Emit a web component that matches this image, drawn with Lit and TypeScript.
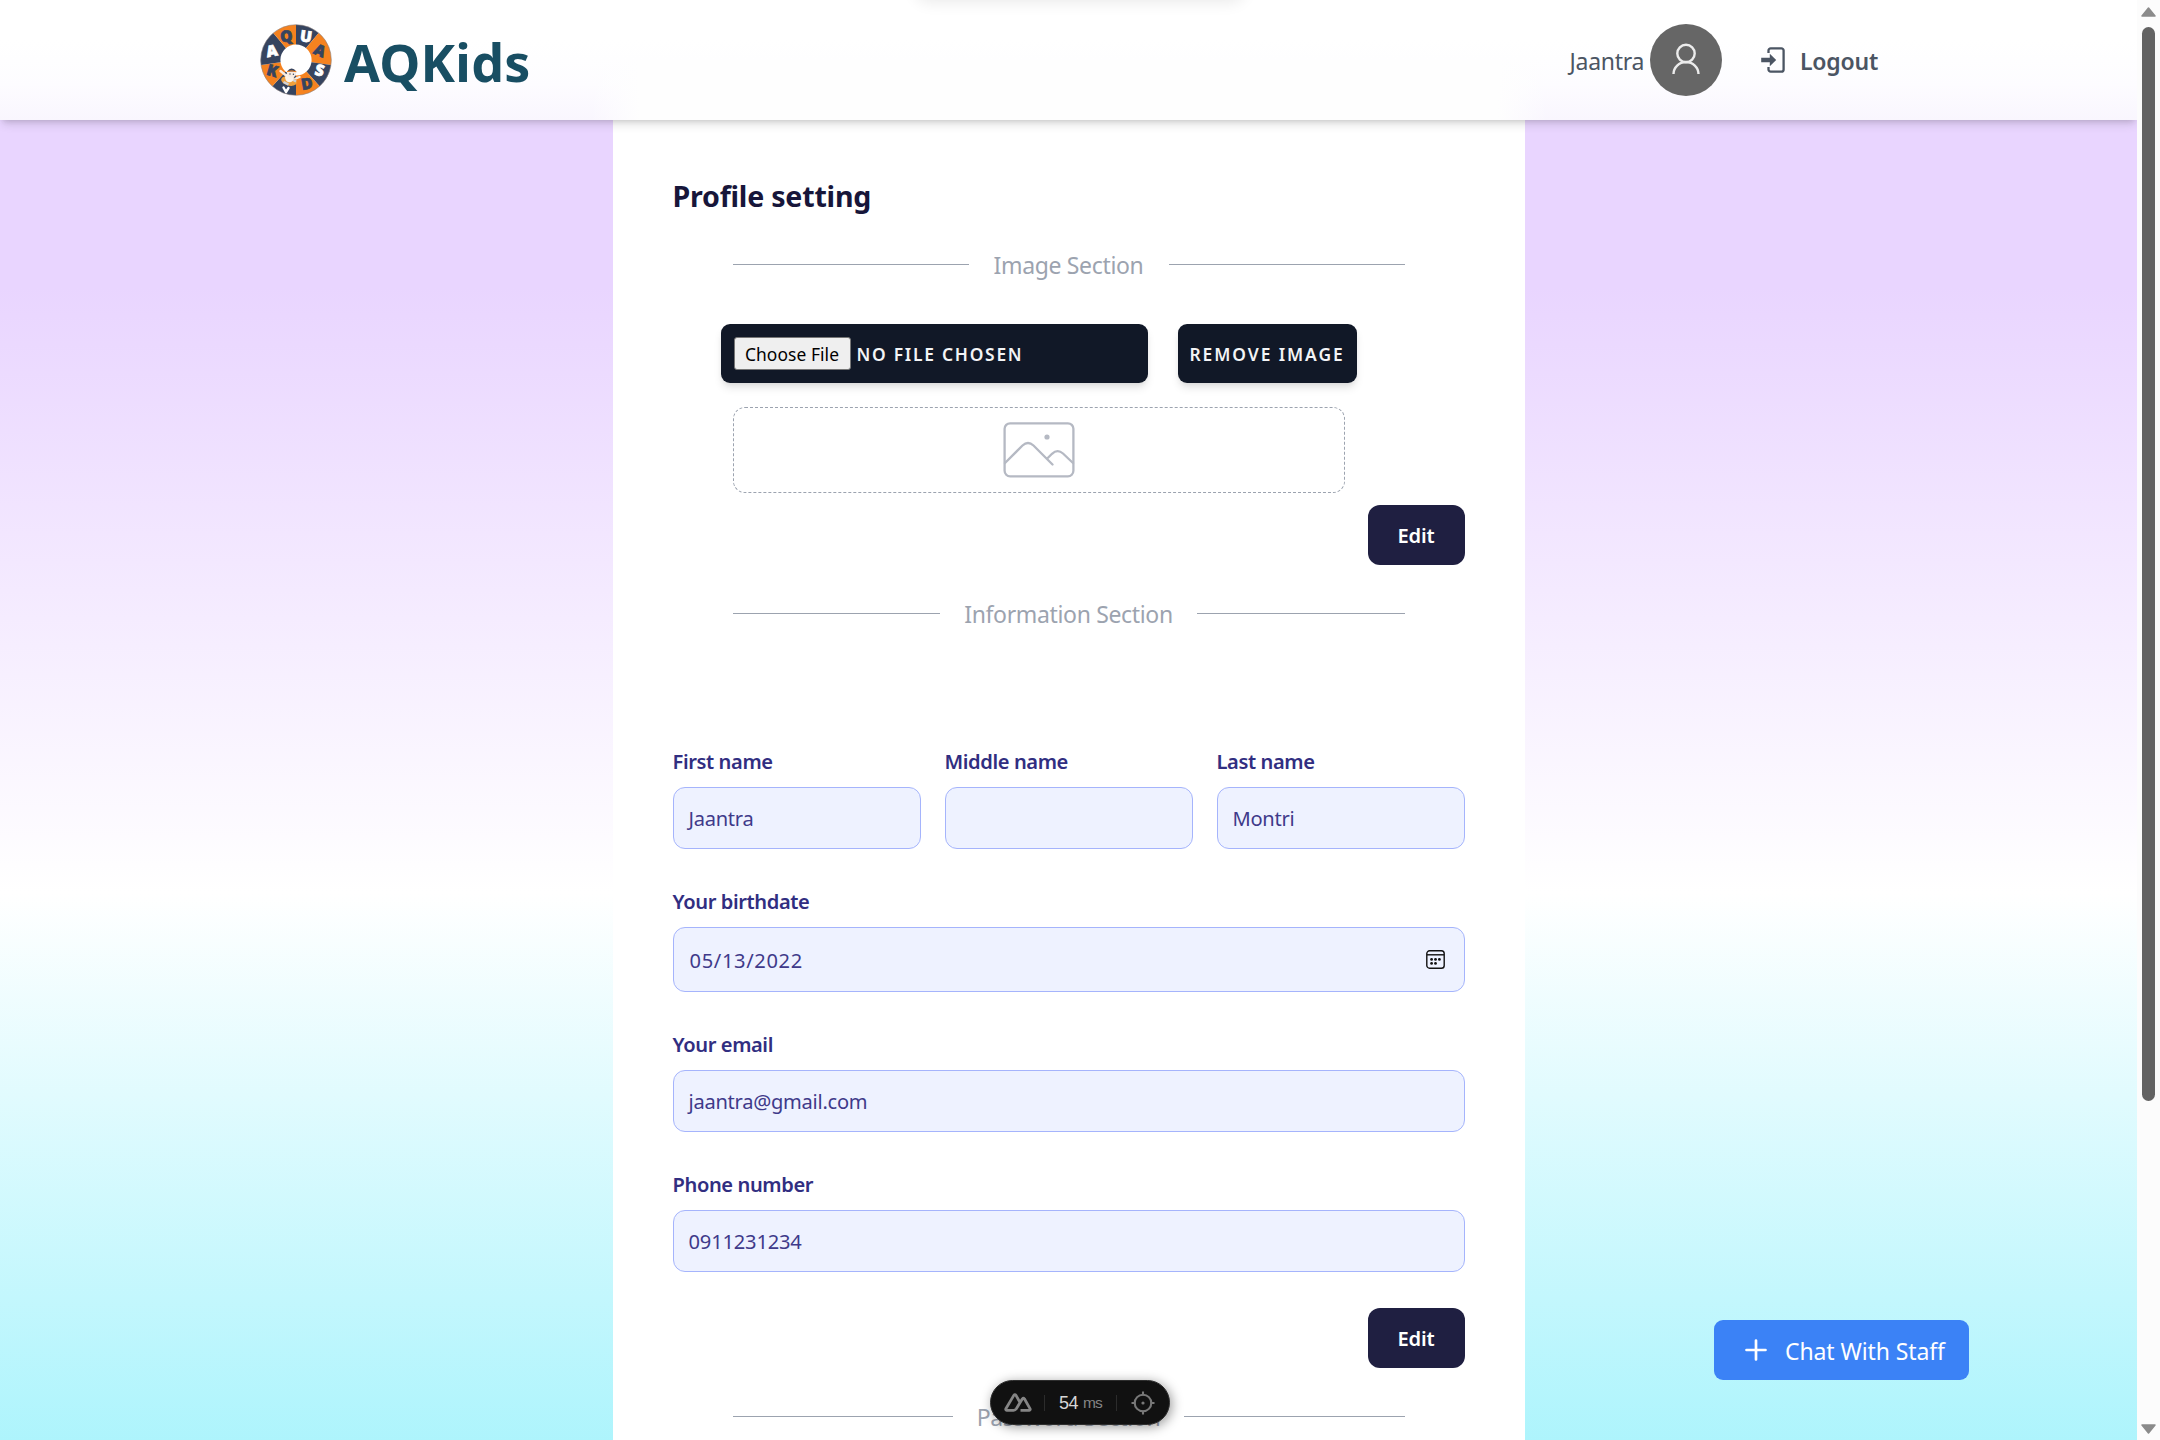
import { LitElement, html, css, svg } from "lit";
import { customElement, property } from "lit/decorators.js";

const fontStack = css`"Noto Sans", "Open Sans", sans-serif`;

/** Round brand mark: a ring of alternating slices with one letter in each. */
@customElement("brand-mark")
class BrandMark extends LitElement {
  static styles = css`
    :host { display: block; width: 72px; height: 72px; }
    svg { display: block; }
    .letter { font: 900 15.5px "Noto Sans", sans-serif; text-anchor: middle; stroke-width: 0.7; }
  `;

  private slices = [
    { from: 0, to: 40, text: "U", at: 23, turn: 8 },
    { from: 40, to: 98, text: "A", at: 68, turn: 24 },
    { from: 98, to: 138, text: "S", at: 113, turn: 14 },
    { from: 138, to: 180, text: "D", at: 155, turn: -10 },
    { from: 180, to: 222, text: "", at: 200, turn: 0 },
    { from: 222, to: 262, text: "K", at: 246, turn: 16 },
    { from: 262, to: 320, text: "A", at: 291, turn: -10 },
    { from: 320, to: 360, text: "Q", at: 338, turn: -6 },
  ];

  private point(deg: number, r: number) {
    const a = (deg * Math.PI) / 180;
    return `${(36 + r * Math.sin(a)).toFixed(2)} ${(36 - r * Math.cos(a)).toFixed(2)}`;
  }

  render() {
    return html`<svg width="72" height="72" viewBox="0 0 72 72">
      ${this.slices.map((s, i) => {
        const navy = i % 2 === 0;
        const ink = navy ? "#fff" : "#36445f";
        return svg`
          <path d="M36 36L${this.point(s.from, 35.3)}A35.3 35.3 0 0 1 ${this.point(s.to, 35.3)}Z"
            fill=${navy ? "#36445f" : "#f5821f"} />
          <g transform="translate(${this.point(s.at, 25.8)}) rotate(${s.turn})">
            <text class="letter" y="5.6" fill=${ink} stroke=${ink}>${s.text}</text>
          </g>`;
      })}
      <circle cx="36" cy="36" r="35.3" fill="none" stroke="#8b7f7c" stroke-width=".6" />
      <circle cx="36" cy="36" r="15.6" fill="#fff" />
      <path d="M20.5 47l5 4M39.5 53l-5 2" stroke="#f7ede4" stroke-width="2.4" stroke-linecap="round" />
      <ellipse cx="29" cy="57" rx="8" ry="4.6" fill="#f0a03c" transform="rotate(14 29 57)" />
      <path d="M23.5 58l5 2.5M31 54.5l5 3" stroke="#cfd3da" stroke-width="2.4" />
      <ellipse cx="29.5" cy="53.5" rx="4.4" ry="4.8" fill="#fbf3ea" />
      <circle cx="31.5" cy="49" r="4.6" fill="#f8ece2" />
      <path d="M27 47.4q4.6-5.8 9.4 0z" fill="#36445f" />
      <path d="M27 47.6q5-1.6 9.4.2" fill="none" stroke="#f5821f" stroke-width="1" />
      <circle cx="30" cy="50" r=".7" fill="#36445f" /><circle cx="33.4" cy="50.2" r=".7" fill="#36445f" />
      <path d="M23.5 63.5l2.5 4.5M28.5 64l-2.5 4" stroke="#fff" stroke-width="2.4" stroke-linecap="round" />
    </svg>`;
  }
}

/** Section caption with a rule on either side. */
@customElement("section-divider")
class SectionDivider extends LitElement {
  @property() label = "";
  @property({ type: Number }) span = 200;
  static styles = css`
    :host { display: block; padding: 0 60px; }
    .row { display: flex; align-items: center; height: 36px; }
    .rule { flex: 1; height: 1px; background: #9ca3af; }
    .text { text-align: center; white-space: nowrap; font: 400 23px/34px ${fontStack}; letter-spacing: -0.34px; color: #9ca3af; padding-top: 2px; }
  `;
  render() {
    return html`<div class="row">
      <div class="rule"></div>
      <div class="text" style="width:${this.span}px">${this.label}</div>
      <div class="rule"></div>
    </div>`;
  }
}

@customElement("form-field")
class FormField extends LitElement {
  @property() label = "";
  @property() value = "";
  @property() kind = "text";
  static styles = css`
    :host { display: block; }
    .label { display: block; height: 30px; font: 600 20.1px/29px ${fontStack}; letter-spacing: -0.4px; color: #312e81; white-space: nowrap; }
    .box { box-sizing: border-box; display: flex; align-items: center; justify-content: space-between; width: 100%; height: 62px;
      margin-top: 10px; padding: 2px 15px 0; border: 1px solid #a5b4fc; border-radius: 12px; background: #eef2ff;
      font: 400 20.1px/30px ${fontStack}; letter-spacing: -0.27px; color: #3f3a8a; }
    .date { height: 65px; padding: 3px 19px 0 16px; letter-spacing: 0.65px; }
    .digits { letter-spacing: -0.18px; }
    .calendar { margin-top: -3px; }
  `;
  render() {
    return html`<span class="label">${this.label}</span>
      <div class="box ${this.kind}">
        <span>${this.value}</span>
        ${this.kind === "date"
          ? html`<svg class="calendar" width="19" height="19" viewBox="0 0 19 19" fill="none" stroke="#111" stroke-width="1.4">
              <rect x=".8" y=".8" width="17.4" height="17.4" rx="2.8" /><path d="M1 4.8h17" />
              <g fill="#111" stroke="none"><circle cx="5.6" cy="9.4" r="1.4" /><circle cx="9.5" cy="9.4" r="1.4" /><circle cx="13.4" cy="9.4" r="1.4" /><circle cx="5.6" cy="13.4" r="1.4" /><circle cx="9.5" cy="13.4" r="1.4" /></g>
            </svg>`
          : ""}
      </div>`;
  }
}

@customElement("app-root")
class AppRoot extends LitElement {
  static styles = css`
    :host { display: block; font-family: ${fontStack}; }
    .window { position: relative; display: grid; grid-template-columns: 2137px 23px; height: 1440px; overflow: hidden; background: #fff; }
    .page { display: flex; flex-direction: column; min-width: 0; height: 1440px; overflow: hidden; background: linear-gradient(180deg, #e9d5ff 287px, #fff 893px, #a5f3fc 1500px); }
    .header { position: relative; z-index: 1; flex: none; box-sizing: border-box; display: flex; align-items: center; justify-content: space-between; height: 120px; padding: 0 261px 0 260px;
      background: linear-gradient(90deg, rgba(254,254,254,0) 590px, #fefefe 640px, #fefefe 1498px, rgba(254,254,254,0) 1548px) 0 60px / 100% 60px no-repeat, linear-gradient(180deg, #fff 40px, #fefeff 60px, #fdfcff 85px, #f9f6fe 120px);
      box-shadow: 0 6px 9px -1.5px rgba(0,0,0,.12), 0 3px 6px -3px rgba(0,0,0,.16); }
    .notch { position: absolute; left: 920px; top: -20px; width: 320px; height: 18px; border-radius: 9px; box-shadow: 0 0 16px 4px rgba(0,0,0,.09); }
    .brand { display: flex; align-items: center; gap: 12px; }
    .name { font: 700 52px/72px ${fontStack}; letter-spacing: 0.25px; color: #184e63; padding-top: 4px; }
    .account { display: flex; align-items: center; color: #4b5563; }
    .user { font: 400 23px/36px ${fontStack}; letter-spacing: -0.3px; padding-top: 2px; }
    .avatar { display: block; margin-left: 6px; }
    .exit { display: block; margin-left: 39px; }
    .logout { width: 76px; margin-left: 15px; font: 600 23px/36px ${fontStack}; letter-spacing: -0.22px; padding-top: 2px; white-space: nowrap; }
    .card { box-sizing: border-box; flex: 1; width: 912px; margin: 0 auto; padding: 55px 60px 0; background: #fff; }
    .title { margin: 0 0 29px; font: 700 28.6px/42px ${fontStack}; letter-spacing: -0.22px; color: #17163a; }
    .upload { display: flex; gap: 30px; margin: 42px 0 0 48px; }
    .dark { box-sizing: border-box; display: flex; align-items: center; height: 59px; border-radius: 9px; background: #111827; color: #f3f4f6; font: 600 17.4px/24px ${fontStack}; letter-spacing: 1.74px; box-shadow: 0 6px 9px -1.5px rgba(0,0,0,.1), 0 3px 6px -3px rgba(0,0,0,.1); white-space: nowrap; }
    .file { width: 427px; padding-left: 13px; }
    .remove { width: 179px; padding-left: 12px; letter-spacing: 1.92px; }
    .choose { box-sizing: border-box; width: 117px; height: 33px; margin-right: 6px; border: 1px solid #767676; border-radius: 3px; background: #efefef; color: #000; font: 400 17.4px/32px ${fontStack}; letter-spacing: 0.08px; text-align: center; }
    .caption { padding-top: 1px; }
    .preview { box-sizing: border-box; display: flex; align-items: center; justify-content: center; width: 612px; height: 86px; margin: 24px 0 0 60px; border: 1px dashed #9ca3af; border-radius: 12px; }
    .actions { display: flex; justify-content: flex-end; }
    .edit { box-sizing: border-box; width: 97px; height: 60px; padding-top: 2px; border-radius: 12px; background: #1f1f41; color: #fff; font: 600 20.1px/58px ${fontStack}; letter-spacing: -0.2px; text-align: center; }
    .first { margin: 12px 0 30px; }
    .names { display: grid; grid-template-columns: repeat(3, 1fr); gap: 24px; margin-top: 116px; margin-bottom: 38px; }
    .birth { margin-bottom: 38px; }
    .email { margin-bottom: 38px; }
    .second { margin: 36px 0 30px; }
    .chat { position: absolute; left: 1714px; top: 1320px; box-sizing: border-box; display: flex; align-items: center; width: 255px; height: 60px; padding-left: 31px; border-radius: 9px; background: #3b82f6; color: #fff; font: 400 23px/36px ${fontStack}; letter-spacing: -0.1px; white-space: nowrap; }
    .chat-text { margin-left: 18px; padding-top: 2px; }
    .devtools { position: absolute; left: 990px; top: 1380px; box-sizing: border-box; display: flex; align-items: center; width: 180px; height: 45px; padding-left: 13px; border: 1px solid #2e2e2e; border-radius: 23px; background: #111; box-shadow: 2px 2px 12px rgba(0,0,0,.4); font-family: "Liberation Sans", Arial, sans-serif; z-index: 2; }
    .bar { width: 1px; height: 16px; background: #2c2c2c; }
    .time { width: 19px; margin-left: 14px; font-size: 18px; line-height: 20px; letter-spacing: -0.4px; color: #d6d6d6; }
    .unit { width: 19px; margin: 0 14px 0 5px; font-size: 15.5px; line-height: 20px; letter-spacing: -0.8px; color: #858585; }
    .logo { margin-right: 12px; }
    .target { margin-left: 14px; }
    .scrollbar { display: flex; flex-direction: column; align-items: center; padding: 7px 0 6px; background: #fcfcfc; }
    .thumb { width: 13px; height: 1074px; margin: 10px 0 auto; border-radius: 7px; background: #636363; }
  `;

  render() {
    return html`<div class="window">
      <div class="page">
        <header class="header">
          <div class="notch"></div>
          <div class="brand"><brand-mark></brand-mark><span class="name">AQKids</span></div>
          <div class="account">
            <span class="user">Jaantra</span>
            <svg class="avatar" width="72" height="72" viewBox="0 0 72 72">
              <circle cx="36" cy="36" r="36" fill="#666" />
              <g fill="none" stroke="#ececec" stroke-width="2.4"><circle cx="36" cy="29.5" r="8.7" /><path d="M23.5 50a12.5 12 0 0 1 25 0" /></g>
            </svg>
            <svg class="exit" width="24" height="26" viewBox="0 0 24 26">
              <path d="M7.5 6V3.6A2.2 2.2 0 0 1 9.7 1.4H20.4A2.2 2.2 0 0 1 22.6 3.6V22.4A2.2 2.2 0 0 1 20.4 24.6H9.7A2.2 2.2 0 0 1 7.5 22.4V20" fill="none" stroke="#4b5563" stroke-width="2.3" />
              <path d="M.2 10.8h8.6V6.8L15.2 13l-6.4 6.2V15.2H.2z" fill="#4b5563" />
            </svg>
            <span class="logout">Logout</span>
          </div>
        </header>
        <main class="card">
          <h1 class="title">Profile setting</h1>
          <section-divider label="Image Section" .span=${200}></section-divider>
          <div class="upload">
            <div class="dark file"><span class="choose">Choose File</span><span class="caption">NO FILE CHOSEN</span></div>
            <div class="dark remove"><span class="caption">REMOVE IMAGE</span></div>
          </div>
          <div class="preview">
            <svg width="72" height="56" viewBox="0 0 72 56" fill="none" stroke="#b5b9c3" stroke-width="2.3" stroke-linecap="round">
              <rect x="1.6" y="1.3" width="68.8" height="53" rx="5.5" />
              <path d="M2 41L19.5 23.5Q25 18.5 30.5 23.5L49.5 42.5M44 36.8L49 31.8Q54.5 26.6 60 31.5L70 41" />
              <circle cx="44" cy="15" r="2.6" fill="#b5b9c3" stroke="none" />
            </svg>
          </div>
          <div class="actions first"><div class="edit">Edit</div></div>
          <section-divider label="Information Section" .span=${257}></section-divider>
          <div class="names">
            <form-field label="First name" value="Jaantra"></form-field>
            <form-field label="Middle name"></form-field>
            <form-field label="Last name" value="Montri"></form-field>
          </div>
          <form-field class="birth" label="Your birthdate" value="05/13/2022" kind="date"></form-field>
          <form-field class="email" label="Your email" value="jaantra@gmail.com"></form-field>
          <form-field label="Phone number" value="0911231234" kind="digits"></form-field>
          <div class="actions second"><div class="edit">Edit</div></div>
          <section-divider label="Password Section" .span=${231}></section-divider>
        </main>
      </div>
      <div class="scrollbar">
        <svg width="15" height="10" viewBox="0 0 15 10"><path d="M7.5 1L14 9H1z" fill="#8b8b8b" stroke="#8b8b8b" stroke-width="1.5" stroke-linejoin="round" /></svg>
        <div class="thumb"></div>
        <svg width="15" height="10" viewBox="0 0 15 10"><path d="M7.5 9L14 1H1z" fill="#8b8b8b" stroke="#8b8b8b" stroke-width="1.5" stroke-linejoin="round" /></svg>
      </div>
      <div class="chat">
        <svg width="22" height="22" viewBox="0 0 22 22" stroke="#fff" stroke-width="2.7" stroke-linecap="round"><path d="M11 1.5v19M1.5 11h19" /></svg>
        <span class="chat-text">Chat With Staff</span>
      </div>
      <div class="devtools">
        <svg class="logo" width="28" height="19" viewBox="0 0 28 19" fill="none" stroke="#858585" stroke-width="2.8" stroke-linejoin="round">
          <path d="M16.5 17.3H25.2Q26.7 17.1 26 15.6L20.4 5.8Q19.4 4.6 18.4 5.8L12.3 15.8Q11.3 17.3 9.6 17.3H2.8Q1.2 17.1 2 15.5L9.8 2.4Q10.9 1 12 2.4L15.6 8.8" />
        </svg>
        <div class="bar"></div>
        <span class="time">54</span><span class="unit">ms</span>
        <div class="bar"></div>
        <svg class="target" width="24" height="24" viewBox="0 0 24 24" fill="none" stroke="#787878" stroke-width="2.1"><circle cx="12" cy="12" r="8.3" /><path d="M12 .5v4M12 19.5v4M.5 12h4M19.5 12h4" /><circle cx="12" cy="12" r="1.6" fill="#787878" stroke="none" /></svg>
      </div>
    </div>`;
  }
}
